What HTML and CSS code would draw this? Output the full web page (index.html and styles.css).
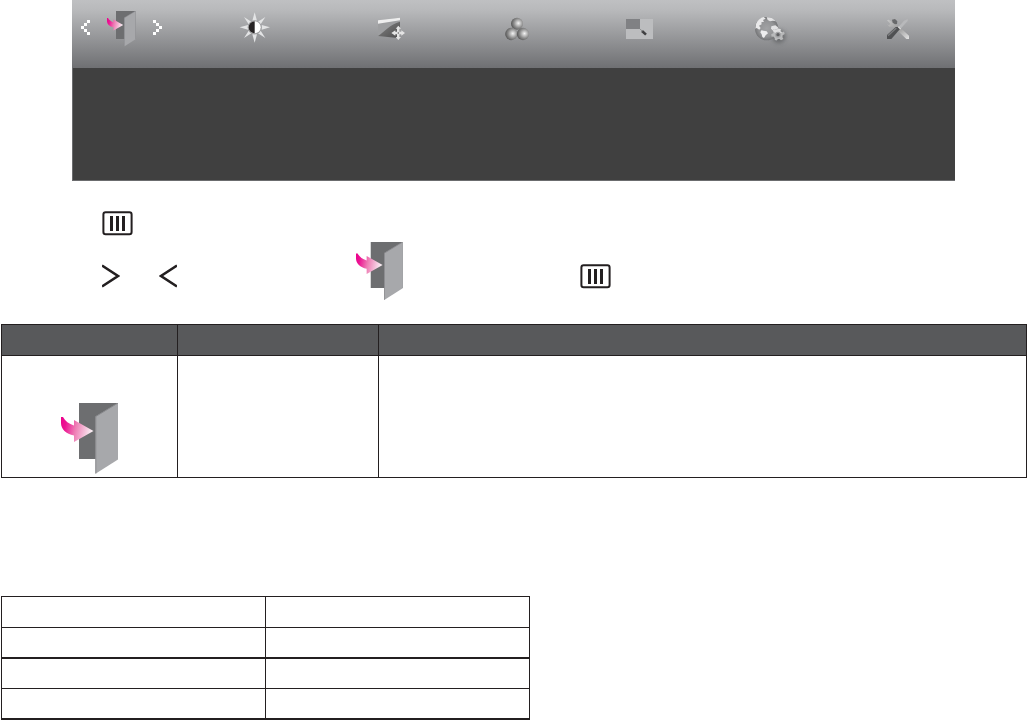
FILE: index.html
```html
<!DOCTYPE html>
<html lang="en">
<head>
<meta charset="utf-8">
<title>OSD menu</title>
<link rel="stylesheet" href="styles.css">
</head>
<body>
<svg class="defs" width="0" height="0" aria-hidden="true">
  <defs>
    <linearGradient id="pink" x1="0" y1="0" x2="1" y2="0.15">
      <stop offset="0" stop-color="#ec008c"/><stop offset=".18" stop-color="#ec1493"/><stop offset=".5" stop-color="#ee7db4"/><stop offset="1" stop-color="#faeef4"/>
    </linearGradient>
    <radialGradient id="ball" cx=".62" cy=".46" r=".62">
      <stop offset="0" stop-color="#f4f4f4"/><stop offset=".25" stop-color="#c9c9c9"/><stop offset=".6" stop-color="#8e8e8e"/><stop offset="1" stop-color="#555"/>
    </radialGradient>
    <linearGradient id="wedge" x1="0" y1="0" x2="1" y2="1">
      <stop offset="0" stop-color="#858585"/><stop offset="1" stop-color="#4b4b4b"/>
    </linearGradient>
    <radialGradient id="globe" cx=".5" cy=".5" r=".52">
      <stop offset="0" stop-color="#a2a3a5"/><stop offset=".65" stop-color="#929395"/><stop offset="1" stop-color="#717274"/>
    </radialGradient>
    <linearGradient id="blade" x1="0" y1="0" x2="1" y2="1">
      <stop offset="0" stop-color="#c9c9c9"/><stop offset=".5" stop-color="#999"/><stop offset="1" stop-color="#e4e4e4"/>
    </linearGradient>
    <filter id="soft" x="-50%" y="-50%" width="200%" height="200%"><feGaussianBlur stdDeviation="6"/></filter>
    <symbol id="door" viewBox="0 0 58 71">
      <path d="M18 0H57V56H18Z" fill="#6d6e70"/>
      <path d="M34.5 13.5 57 0V56.5L34.5 70.8Z" fill="#a7a8ab"/>
      <path d="M34.8 70.5V13.5L57 0" fill="none" stroke="#8a8b8e" stroke-width="1"/>
      <path d="M0 14H2C4 18 8 21 13 22.5V17L32.5 28 13 39V32.5C5 31 0 26 0 20Z" fill="url(#pink)"/>
    </symbol>
    <symbol id="menu-key" viewBox="0 0 31 25">
      <rect x="1.4" y="1.2" width="28.2" height="22" rx="2.2" fill="#fff" stroke="#231f20" stroke-width="2"/>
      <path d="M9.5 5V20M15.5 5V20M21.5 5V20" stroke="#231f20" stroke-width="3"/>
    </symbol>
  </defs>
</svg>

<section class="osd">
  <nav class="osd-bar">
    <div class="tab tab-active">
      <svg class="chevron" viewBox="0 0 9 15" shape-rendering="crispEdges"><path d="M6 0h3v3H6zM3 3h3v3H3zM0 6h3v3H0zM3 9h3v3H3zM6 12h3v3H6z" fill="#fff"/></svg>
      <svg class="door-small"><use href="#door"/></svg>
      <svg class="chevron" viewBox="0 0 9 15" shape-rendering="crispEdges"><path d="M0 0h3v3H0zM3 3h3v3H3zM6 6h3v3H6zM3 9h3v3H3zM0 12h3v3H0z" fill="#fff"/></svg>
    </div>
    <svg class="tab-icon" viewBox="0 0 180 180">
      <path d="M89 37 96 62H82ZM89 128 82 103H96ZM44 82 69 75V89ZM135 82 110 75V89ZM57 51 79 65 71 73ZM121 51 107 73 99 65ZM57 114 71 92 79 100ZM121 114 99 100 107 92Z" fill="#e3e4e5"/>
      <circle cx="89" cy="82" r="21" fill="#a0a1a3"/>
      <circle cx="89" cy="82" r="18" fill="#fff"/>
      <path d="M89 64A18 18 0 0 0 89 100Z" fill="#262324"/>
    </svg>
    <svg class="tab-icon" viewBox="0 0 180 180">
      <path d="M39 61 105 53V115L39 108Z" fill="#9d9ea0"/>
      <path d="M39 108C60 94 74 74 105 65V115Z" fill="url(#wedge)"/>
      <path d="M39 61 105 53V61L39 71Z" fill="#eee"/>
      <path d="M100 77 108 86H104V95H109V91L120 99 109 107V103H104V111H108L100 120 92 111H96V103H91V107L79 99 91 91V95H96V86H92Z" fill="#e4e4e4"/>
      <circle cx="100" cy="99" r="2.5" fill="#666"/>
    </svg>
    <svg class="tab-icon" viewBox="0 0 180 180">
      <circle cx="81" cy="71" r="18" fill="url(#ball)"/>
      <circle cx="64" cy="102" r="18.5" fill="url(#ball)"/>
      <circle cx="99" cy="102" r="18.5" fill="url(#ball)"/>
    </svg>
    <svg class="tab-icon" viewBox="0 0 180 180">
      <path d="M33 57H114V117H33Z" fill="#bcbdbf"/>
      <path d="M33 57H75V87H33Z" fill="#808184"/>
      <path d="M75 87 82 94" stroke="#77787a" stroke-width="2"/>
      <path d="M81 93 93 104" stroke="#3f3f41" stroke-width="7.5"/>
      <path d="M80 90 84 94" stroke="#8c8c8e" stroke-width="2"/>
    </svg>
    <svg class="tab-icon" viewBox="0 0 180 180">
      <circle cx="101" cy="109" r="20" fill="#4c4d4f" opacity=".6" filter="url(#soft)"/>
      <circle cx="65" cy="86" r="35" fill="url(#globe)"/>
      <path d="M33 72C38 60 47 53 56 51L62 56 54 60 57 65 49 67 50 73 42 77 47 84 43 89 35 84 31 86Z" fill="#e9e9ea"/>
      <path d="M49 91 65 94 69 100 62 106 57 114 52 111 50 103 46 97Z" fill="#ededee"/>
      <path d="M65 52C77 51 86 56 92 64L84 62 75 64 68 60ZM79 79 91 76 99 82 98 91 89 87 83 91 78 86Z" fill="#e3e3e4"/>
      <g transform="rotate(15 99 104)">
        <path d="M95 86H103V92L109 94 114 90 118 97 113 102 114 108 118 112 112 118 107 115 102 117 100 122H94L92 116 87 113 82 115 79 108 84 104 84 99 80 95 85 90 91 92Z" fill="#b9babb"/>
        <path d="M95 86H103V92L109 94 99 104 84 99 80 95 85 90 91 92Z" fill="#dededf"/>
      </g>
      <circle cx="99" cy="104" r="9" fill="#a3a4a6"/>
      <circle cx="99" cy="104" r="5" fill="#606163"/>
    </svg>
    <svg class="tab-icon" viewBox="0 0 180 180">
      <path d="M51 61 56 59 71 69 88 80 117 107V117H109L80 89 69 80H58L51 72 56 76 61 72Z" fill="url(#blade)"/>
      <path d="M66 59 75 57 82 64 81 72 75 73 68 68Z" fill="#68696b"/>
      <path d="M113 57V63L93 85 86 80 102 62Z" fill="#b8b9bb"/>
      <path d="M88 81 92 85 64 117H51V105L77 81Z" fill="#505153"/>
      <path d="M54 107 79 84" stroke="#7b7c7e" stroke-width="4"/>
      <path d="M85 80 92 87" stroke="#ddd" stroke-width="4"/>
    </svg>
  </nav>
  <div class="osd-panel"></div>
</section>

<div class="step step-one"><svg class="key"><use href="#menu-key"/></svg></div>
<div class="step step-two">
  <svg class="arrow" viewBox="0 0 18 24"><path d="M0 1.5 16 12 0 22.5" fill="none" stroke="#231f20" stroke-width="2.6"/></svg>
  <svg class="arrow arrow-left" viewBox="0 0 18 24"><path d="M18 1.5 2 12 18 22.5" fill="none" stroke="#231f20" stroke-width="2.6"/></svg>
  <svg class="door-medium"><use href="#door"/></svg>
  <svg class="key key-second"><use href="#menu-key"/></svg>
</div>

<table class="grid functions">
  <colgroup><col class="col-icon"><col class="col-name"><col></colgroup>
  <thead><tr><th></th><th></th><th></th></tr></thead>
  <tbody><tr><td><svg class="door-large"><use href="#door"/></svg></td><td></td><td></td></tr></tbody>
</table>

<table class="grid values">
  <tbody>
    <tr><td></td><td></td></tr>
    <tr class="heavy"><td></td><td></td></tr>
    <tr><td></td><td></td></tr>
    <tr class="heavy"><td></td><td></td></tr>
  </tbody>
</table>
</body>
</html>
```
FILE: styles.css
```css
* { box-sizing: border-box; }
body {
  margin: 0;
  height: 720px;
  overflow: hidden;
  background: #fff;
  font-family: "Liberation Sans", Arial, sans-serif;
}
svg { display: block; flex: none; }
.defs { position: absolute; }

.osd { width: 883px; margin-left: 72px; }
.osd-bar {
  display: grid;
  grid-template-columns: 153px 140px 125px 125px 130px 125px 85px;
  height: 68px;
  background: linear-gradient(#bfc0c2, #b8b9bb 15%, #6f7073);
}
.tab-active { display: flex; align-items: flex-start; padding: 11px 0 0 9px; }
.chevron { width: 9px; height: 15px; margin-top: 9px; }
.door-small { width: 29px; height: 35.5px; margin: 0 17px 0 17px; }
.tab-icon { width: 60px; height: 60px; }
.osd-panel {
  height: 113px;
  background: #404040;
  border-left: 1px solid #6b6c6e;
  border-bottom: 1px solid #6b6c6e;
}

.step { display: flex; align-items: flex-start; }
.step-one { height: 61px; padding: 30px 0 0 102px; }
.step-two { height: 82px; padding-left: 102px; }
.key { width: 31px; height: 25px; }
.arrow { width: 18px; height: 24px; margin-top: 22px; }
.arrow-left { margin-left: 39px; }
.door-medium { width: 47.5px; height: 58.2px; margin-left: 179px; }
.key-second { margin: 22px 0 0 176.5px; }

.grid { table-layout: fixed; border-collapse: separate; border-spacing: 0; margin-left: 1px; }
.grid th, .grid td { padding: 0; border: solid #231f20; border-width: 0 1px 1px 0; vertical-align: top; }
.grid th:first-child, .grid td:first-child { border-left-width: 1px; }
.grid tr:first-child th { border-top-width: 1px; }

.functions { width: 1026px; }
.col-icon { width: 177px; }
.col-name { width: 201px; }
.functions th { height: 32px; background: #58595b; }
.functions td { height: 122px; }
.door-large { width: 58px; height: 71px; margin: 47px 0 0 59px; }

.values { width: 529px; margin-top: 118px; }
.values td { height: 30px; }
.values td:first-child { width: 265px; }
.values tr:first-child td { height: 32px; border-top-width: 1px; }
.values .heavy td { height: 31px; border-bottom-width: 2px; }
```
